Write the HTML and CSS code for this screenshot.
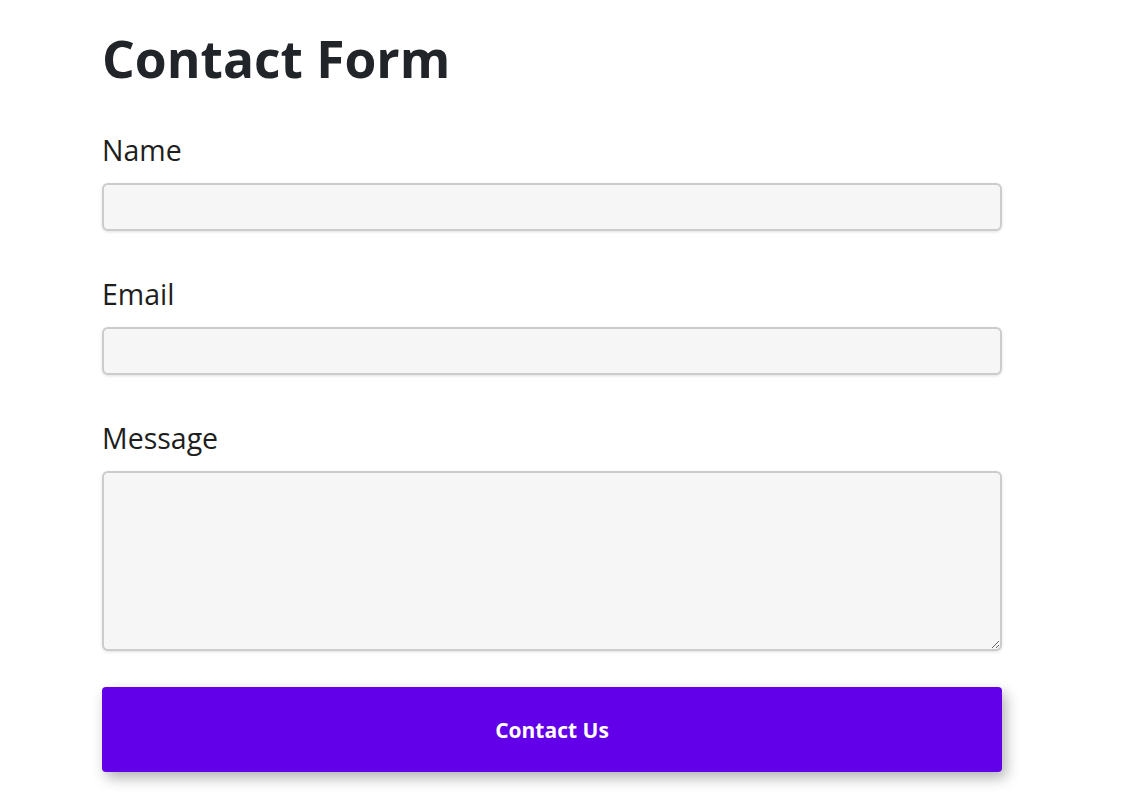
FILE: index.html
```html
<!DOCTYPE html>
<html lang="en">
<head>
<meta charset="utf-8">
<title>Contact Form</title>
<link rel="stylesheet" href="styles.css">
</head>
<body>
<main class="page">
  <h1 class="title">Contact Form</h1>
  <form class="contact-form">
    <div class="field">
      <label class="field-label" for="name">Name</label>
      <input class="field-input" type="text" id="name" name="name">
    </div>
    <div class="field">
      <label class="field-label" for="email">Email</label>
      <input class="field-input" type="email" id="email" name="email">
    </div>
    <div class="field">
      <label class="field-label" for="message">Message</label>
      <textarea class="field-input field-textarea" id="message" name="message"></textarea>
    </div>
    <button class="submit-btn" type="button">Contact Us</button>
  </form>
</main>
</body>
</html>
```

FILE: styles.css
```css
* {
  box-sizing: border-box;
}

html,
body {
  min-height: 100%;
}

body {
  margin: 0;
  background: #ffffff;
  color: #212529;
  font-family: "Open Sans", "Noto Sans", sans-serif;
}

.page {
  width: 900px;
  margin-left: 102px;
  padding-top: 26px;
  padding-bottom: 40px;
}

.title {
  margin: 0 0 42px;
  font-size: 51.5px;
  line-height: 64px;
  font-weight: 700;
  color: #212529;
}

.contact-form {
  display: flex;
  flex-direction: column;
}

.field {
  display: flex;
  flex-direction: column;
  margin-bottom: 45px;
}

.field-label {
  font-size: 28.5px;
  line-height: 36px;
  color: #1e1e1e;
  margin-bottom: 15px;
}

.field-input {
  display: block;
  width: 100%;
  height: 48px;
  border: 2px solid #cccccc;
  border-radius: 6px;
  background: #f6f6f6;
  box-shadow: 0 1px 3px rgba(0, 0, 0, 0.12);
  font-family: inherit;
  font-size: 16px;
  padding: 8px 12px;
  outline: none;
}

.field-textarea {
  height: 180px;
  resize: vertical;
}

.submit-btn {
  display: block;
  width: 100%;
  height: 85px;
  border: none;
  border-radius: 4px;
  background: #6200ea;
  color: #ffffff;
  font-family: inherit;
  font-size: 21px;
  font-weight: 700;
  box-shadow: 4px 6px 14px rgba(0, 0, 0, 0.3);
  cursor: pointer;
  margin-top: -9px;
}
```
